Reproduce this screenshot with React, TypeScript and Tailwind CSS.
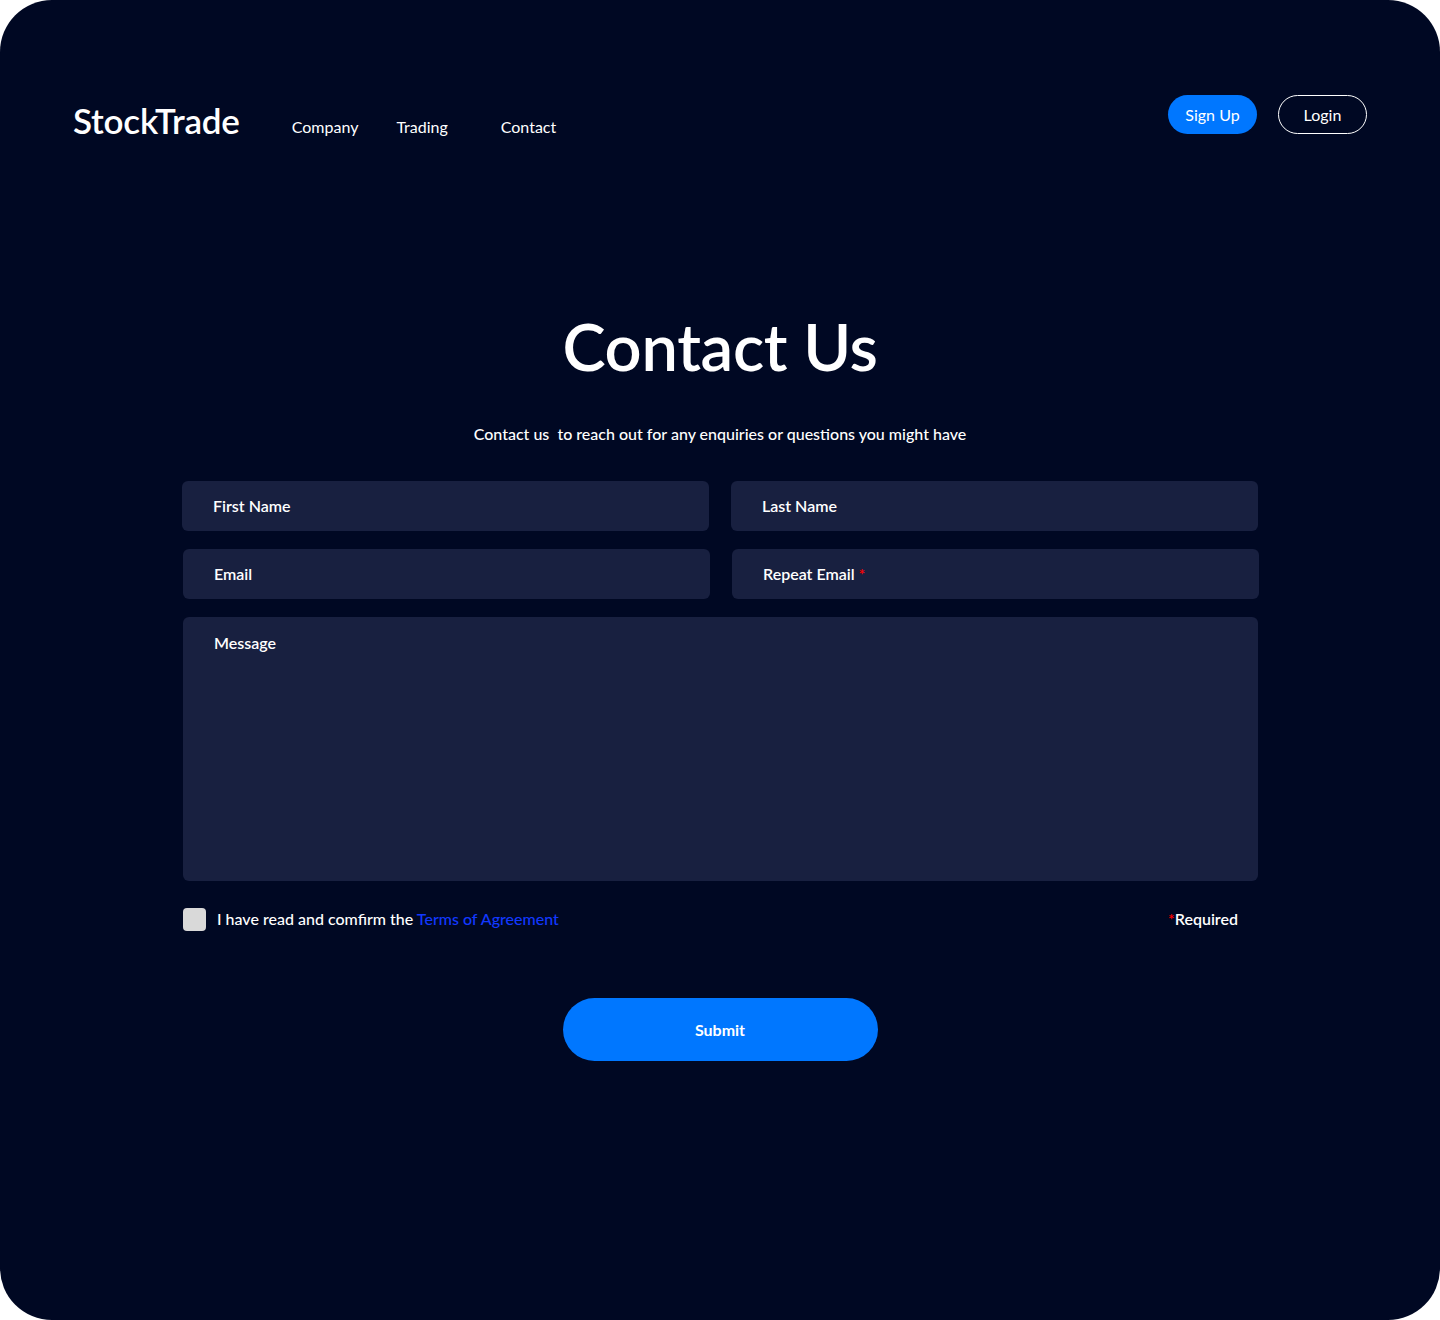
import React, { useState } from 'react';

const Field = ({ label, required = false, className = '' }: { label: string; required?: boolean; className?: string }) => (
  <div className={`h-[50px] rounded-md bg-[#182040] flex items-center pl-[31px] ${className}`}>
    <span className="text-white text-base font-semibold">
      {label}
      {required && <span className="text-[#ff0000] ml-1 text-[16px]">*</span>}
    </span>
  </div>
);

export default function App() {
  const [agreed, setAgreed] = useState(false);

  return (
    <div className="w-[1440px] h-[1320px] bg-white font-['Lato','Noto_Sans',sans-serif]">
      <div className="w-full h-full rounded-[52px] bg-[#000823] text-white flex flex-col">
        {/* Header */}
        <header className="flex items-start justify-between pl-[73px] pr-[73px] pt-[95px]">
          <div className="flex items-end pt-[8px]">
            <h1 className="text-[35px] font-semibold leading-none tracking-[-0.2px]">StockTrade</h1>
            <nav className="flex ml-[52px] mb-[-1px] text-base">
              <a className="mr-[38px]">Company</a>
              <a className="mr-[53px]">Trading</a>
              <a>Contact</a>
            </nav>
          </div>
          <div className="flex gap-[21px]">
            <button className="h-[39px] w-[89px] rounded-full bg-[#0077ff] text-base">Sign Up</button>
            <button className="h-[39px] w-[89px] rounded-full border border-white text-base">Login</button>
          </div>
        </header>

        {/* Main */}
        <main className="flex flex-col items-center mt-[176px]">
          <h2 className="text-[65px] font-semibold leading-none tracking-[-0.3px]">Contact Us</h2>
          <p className="mt-[43px] text-base font-medium whitespace-pre">Contact us  to reach out for any enquiries or questions you might have</p>

          <form className="w-[1076px] mt-[35px] flex flex-col gap-[18px]" onSubmit={e => e.preventDefault()}>
            <div className="grid grid-cols-2 gap-[22px]">
              <Field label="First Name" />
              <Field label="Last Name" />
            </div>
            <div className="grid grid-cols-2 gap-[22px] ml-[1px] mr-[-1px]">
              <Field label="Email" />
              <Field label="Repeat Email" required />
            </div>
            <div className="h-[264px] rounded-md bg-[#182040] pl-[31px] pt-[14px] ml-[1px]">
              <span className="text-base font-semibold">Message</span>
            </div>

            <div className="flex items-center justify-between mt-[8px] pr-[20px] ml-[1px]">
              <label className="flex items-center gap-[11px] cursor-pointer">
                <span
                  onClick={() => setAgreed(!agreed)}
                  className="w-[23px] h-[23px] rounded-[4px] bg-[#d9d9d9] inline-block"
                />
                <span className="text-base font-medium">
                  I have read and comfirm the <span className="text-[#1238ff]">Terms of Agreement</span>
                </span>
              </label>
              <span className="text-base font-semibold">
                <span className="text-[#ff0000]">*</span>Required
              </span>
            </div>
          </form>

          <button className="mt-[67px] w-[315px] h-[63px] rounded-full bg-[#0077ff] text-base font-bold">Submit</button>
        </main>
      </div>
    </div>
  );
}
